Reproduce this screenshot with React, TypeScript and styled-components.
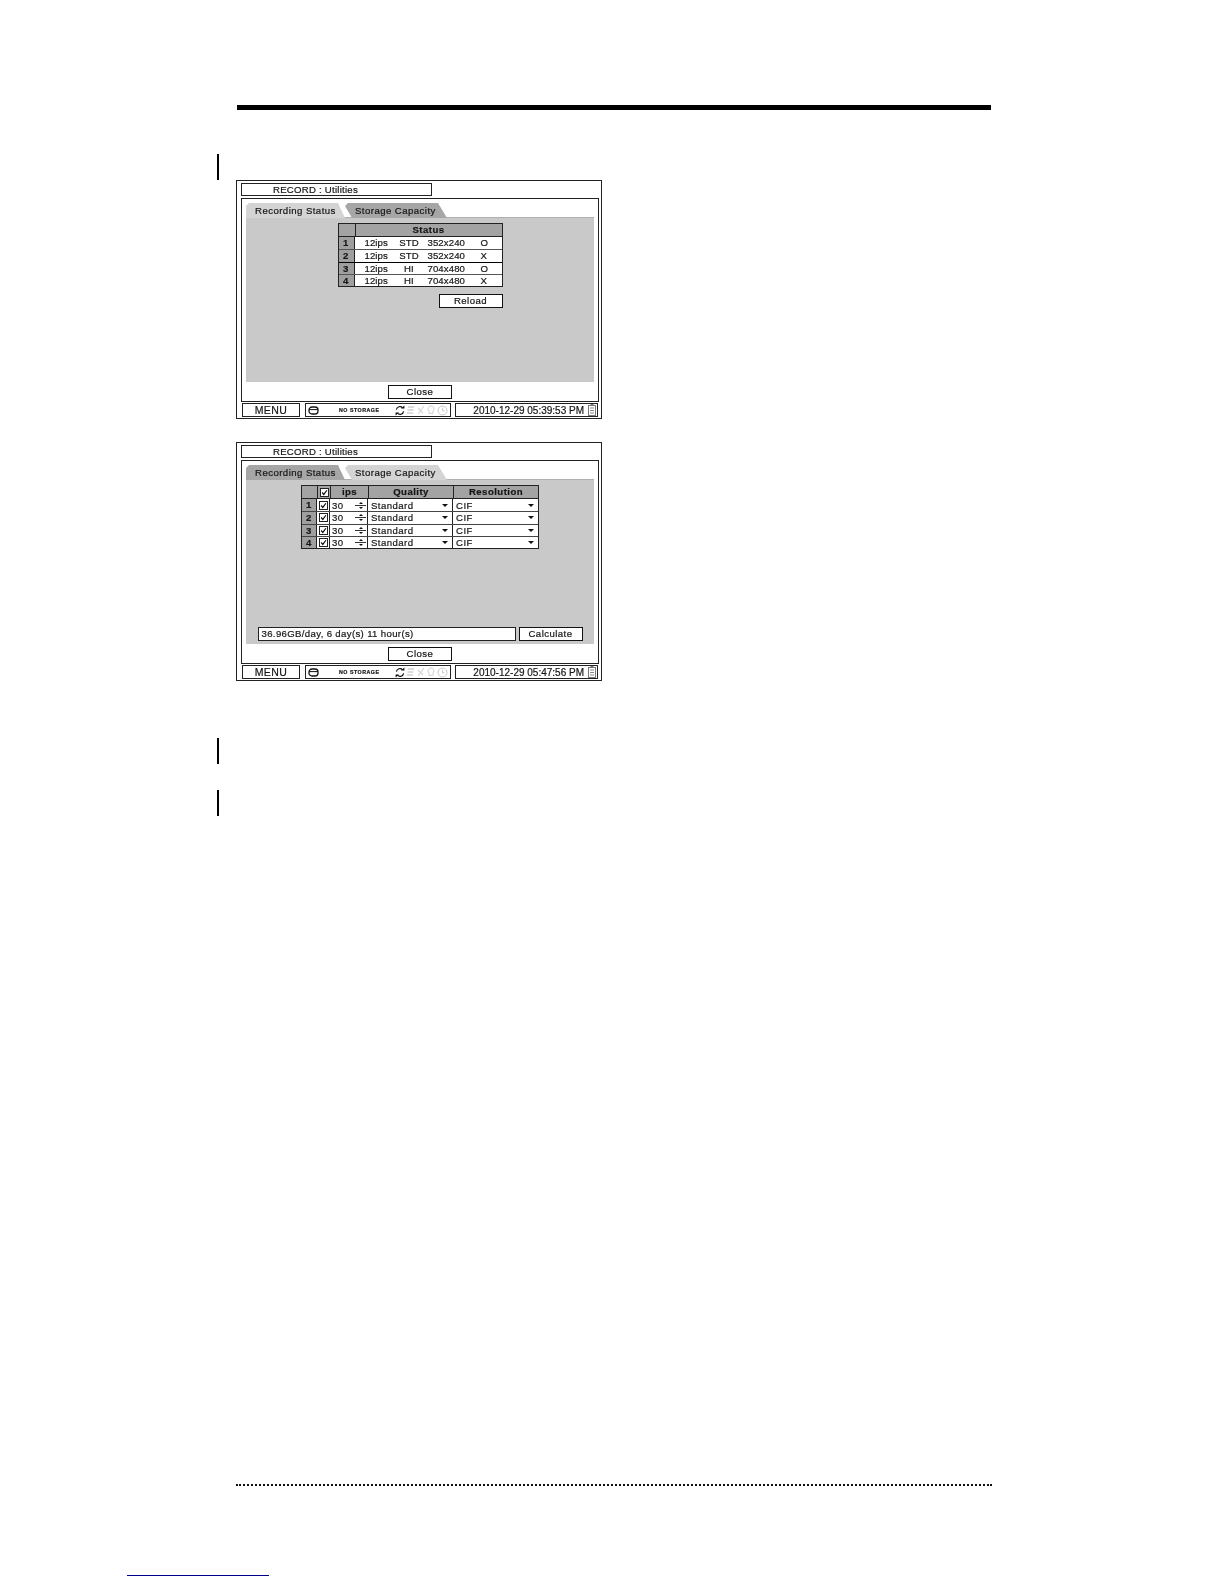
import styled, { createGlobalStyle } from 'styled-components';

const GlobalStyle = createGlobalStyle`
  html, body {
    margin: 0;
    padding: 0;
    background: #ffffff;
    font-family: "Liberation Sans", Arial, sans-serif;
  }
`;

const STATUS_ROWS = [
  { id: 1, ips: '12ips', quality: 'STD', size: '352x240', flag: 'O' },
  { id: 2, ips: '12ips', quality: 'STD', size: '352x240', flag: 'X' },
  { id: 3, ips: '12ips', quality: 'HI', size: '704x480', flag: 'O' },
  { id: 4, ips: '12ips', quality: 'HI', size: '704x480', flag: 'X' },
];

const App = () => {
  return (
    <Page>
      <GlobalStyle />
      <TopRule />
      <SideMark $marginTop={44} />
      <Screen $marginTop={0}>
        <TitleBox>RECORD : Utilities</TitleBox>
        <Panel>
          <Tabs active="recording" />
          <GreyArea>
            <StatusTable>
              <StatusHead>
                <HeadCell />
                <HeadCell>Status</HeadCell>
              </StatusHead>
              {STATUS_ROWS.map((row) => (
                <StatusRow key={row.id} $thick={row.id === 3}>
                  <IndexCell>{row.id}</IndexCell>
                  <StatusData>
                    <span>{row.ips}</span>
                    <StatusQuality>{row.quality}</StatusQuality>
                    <span>{row.size}</span>
                    <span>{row.flag}</span>
                  </StatusData>
                </StatusRow>
              ))}
            </StatusTable>
            <ReloadRow>
              <ActionButton>Reload</ActionButton>
            </ReloadRow>
          </GreyArea>
          <CloseRow>
            <ActionButton>Close</ActionButton>
          </CloseRow>
        </Panel>
        <StatusBar time="2010-12-29 05:39:53 PM" />
      </Screen>
      <Screen $marginTop={23}>
        <TitleBox>RECORD : Utilities</TitleBox>
        <Panel>
          <Tabs active="storage" />
          <GreyArea>
            <StorageTable>
              <StorageHead>
                <HeadCell />
                <HeadCheck>
                  <CheckBox />
                </HeadCheck>
                <HeadCell>ips</HeadCell>
                <HeadCell>Quality</HeadCell>
                <HeadCell>Resolution</HeadCell>
              </StorageHead>
              {[1, 2, 3, 4].map((id) => (
                <StorageRow key={id}>
                  <IndexCell>{id}</IndexCell>
                  <CheckCell>
                    <CheckBox />
                  </CheckCell>
                  <IpsCell>
                    <span>30</span>
                    <Spinner>
                      <SpinUp />
                      <SpinLine />
                      <SpinDown />
                    </Spinner>
                  </IpsCell>
                  <SelectCell>
                    <span>Standard</span>
                    <SelectArrow />
                  </SelectCell>
                  <SelectCell>
                    <span>CIF</span>
                    <SelectArrow />
                  </SelectCell>
                </StorageRow>
              ))}
            </StorageTable>
            <CalcRow>
              <CalcResult>36.96GB/day, 6 day(s) 11 hour(s)</CalcResult>
              <ActionButton>Calculate</ActionButton>
            </CalcRow>
          </GreyArea>
          <CloseRow>
            <ActionButton>Close</ActionButton>
          </CloseRow>
        </Panel>
        <StatusBar time="2010-12-29 05:47:56 PM" />
      </Screen>
      <SideMark $marginTop={57} />
      <SideMark $marginTop={26} />
      <DottedRule />
      <LinkRule />
    </Page>
  );
};

const Tabs = ({ active }: { active: 'recording' | 'storage' }) => {
  return (
    <TabStrip>
      <TabRecording $isActive={active === 'recording'}>Recording Status</TabRecording>
      <TabStorage $isActive={active === 'storage'}>Storage Capacity</TabStorage>
    </TabStrip>
  );
};

const CheckBox = () => {
  return (
    <CheckFrame>
      <svg width="9" height="9" viewBox="0 0 9 9">
        <path d="M1.5 4.5 L3.6 7 L7.6 1.6" fill="none" stroke="#111" strokeWidth="1.5" />
      </svg>
    </CheckFrame>
  );
};

const StatusBar = ({ time }: { time: string }) => {
  return (
    <BarRow>
      <MenuBox>MENU</MenuBox>
      <StorageBox>
        <svg width="11" height="9" viewBox="0 0 11 9">
          <rect x="1" y="1" width="9" height="7" rx="3" fill="none" stroke="#111" strokeWidth="1.3" />
          <path d="M1 3.6 H10" stroke="#111" strokeWidth="1" />
        </svg>
        <NoStorage>NO STORAGE</NoStorage>
        <BarIcons>
          <svg width="10" height="11" viewBox="0 0 10 11">
            <path d="M1.4 4.6 A3.6 3.6 0 0 1 7.6 2.8 M8.6 6.4 A3.6 3.6 0 0 1 2.4 8.2" fill="none" stroke="#111" strokeWidth="1.2" />
            <path d="M6 3.6 H9.4 V0.6 Z M4 7.4 H0.6 V10.4 Z" fill="#111" />
          </svg>
          <svg width="9" height="10" viewBox="0 0 9 10">
            <path d="M2 2 H8 M1.5 5 H7.5 M1 8 H7" stroke="#cfcfcf" strokeWidth="1.6" />
          </svg>
          <svg width="9" height="10" viewBox="0 0 9 10">
            <path d="M2 9 L8 1 M2 3 L7 8" stroke="#d4d4d4" strokeWidth="1.2" />
          </svg>
          <svg width="10" height="10" viewBox="0 0 10 10">
            <path d="M5 1 A3 3 0 0 1 7 6.2 V8.4 H3 V6.2 A3 3 0 0 1 5 1 Z" fill="none" stroke="#cfcfcf" strokeWidth="1" />
          </svg>
          <svg width="11" height="11" viewBox="0 0 11 11">
            <circle cx="5.5" cy="5.5" r="4.5" fill="none" stroke="#c8c8c8" strokeWidth="1" />
            <path d="M5.5 2.6 V5.8 H7.6" fill="none" stroke="#c8c8c8" strokeWidth="1" />
          </svg>
        </BarIcons>
      </StorageBox>
      <TimeBox>
        <span>{time}</span>
        <svg width="8" height="12" viewBox="0 0 8 12">
          <rect x="0.5" y="1.5" width="7" height="10" fill="none" stroke="#777" strokeWidth="1" />
          <rect x="2.5" y="0" width="3" height="1.5" fill="#777" />
          <path d="M2 4 H6 M2 6.5 H6 M2 9 H6" stroke="#888" strokeWidth="1.2" />
        </svg>
      </TimeBox>
    </BarRow>
  );
};

const Page = styled.div`
  width: 1224px;
  height: 1584px;
  padding-top: 105px;
  box-sizing: border-box;
  overflow: hidden;
  background: #ffffff;
`;

const TopRule = styled.div`
  width: 754px;
  height: 5px;
  margin-left: 237px;
  background: #000000;
`;

const SideMark = styled.div<{ $marginTop: number }>`
  width: 2px;
  height: 26px;
  margin-top: ${(props) => props.$marginTop}px;
  margin-left: 217px;
  background: #000000;
`;

const DottedRule = styled.div`
  width: 756px;
  height: 0;
  margin-top: 668px;
  margin-left: 236px;
  border-top: 2px dotted #111111;
`;

const LinkRule = styled.div`
  width: 142px;
  height: 1px;
  margin-top: 89px;
  margin-left: 127px;
  background: #00008b;
`;

const Screen = styled.div<{ $marginTop: number }>`
  display: flex;
  flex-direction: column;
  width: 366px;
  height: 239px;
  margin-top: ${(props) => props.$marginTop}px;
  margin-left: 236px;
  padding: 2px 2px 0 4px;
  box-sizing: border-box;
  border: 1px solid #222222;
  background: #ffffff;
  color: #161616;
  font-size: 9.6px;
  letter-spacing: 0.45px;
  -webkit-text-stroke: 0.2px #161616;
  filter: blur(0.25px);
`;

const TitleBox = styled.div`
  width: 191px;
  height: 13px;
  padding-left: 31px;
  box-sizing: border-box;
  border: 1px solid #222222;
  line-height: 11px;
  letter-spacing: 0.25px;
  white-space: nowrap;
`;

const Panel = styled.div`
  display: flex;
  flex-direction: column;
  width: 358px;
  height: 204px;
  margin-top: 2px;
  padding: 4px 4px 0;
  box-sizing: border-box;
  border: 1px solid #222222;
`;

const TabStrip = styled.div`
  display: flex;
  height: 15px;
  flex-shrink: 0;
  box-sizing: border-box;
  border-bottom: 1px solid #b0b0b0;
`;

const TabRecording = styled.div<{ $isActive: boolean }>`
  width: 99px;
  height: 15px;
  padding-left: 9px;
  box-sizing: border-box;
  background: ${(props) => (props.$isActive ? '#d4d4d4' : '#a6a6a6')};
  line-height: 15px;
  white-space: nowrap;
  clip-path: polygon(3px 0, 92px 0, 99px 100%, 0 100%, 0 3px);
`;

const TabStorage = styled(TabRecording)`
  width: 102px;
  padding-left: 10px;
  clip-path: polygon(3px 0, 93px 0, 102px 100%, 7px 100%, 0 3px);
`;

const GreyArea = styled.div`
  display: flex;
  flex-direction: column;
  align-items: center;
  height: 164px;
  padding: 5px 0 3px;
  box-sizing: border-box;
  background: #c9c9c9;
`;

const TableFrame = styled.div`
  display: flex;
  flex-direction: column;
  box-sizing: border-box;
  background: #ffffff;
`;

const StatusTable = styled(TableFrame)`
  width: 165px;
  border: 1px solid #222222;
`;

const GridHead = styled.div`
  display: grid;
  height: 12px;
  background: #a3a3a3;
  border-bottom: 1px solid #222222;
  box-sizing: content-box;
  font-weight: 700;
`;

const StatusHead = styled(GridHead)`
  grid-template-columns: 16px 1fr;
`;

const HeadCell = styled.div`
  border-left: 1px solid #222222;
  line-height: 12px;
  text-align: center;
  font-weight: 700;

  &:first-child {
    border-left: none;
  }
`;

const StatusRow = styled.div<{ $thick: boolean }>`
  display: grid;
  grid-template-columns: 16px 1fr;
  height: 12.25px;
  box-sizing: border-box;
  border-top: 1px solid ${(props) => (props.$thick ? '#000000' : '#555555')};

  &:nth-child(2) {
    border-top: none;
  }
`;

const IndexCell = styled.div`
  background: #9f9f9f;
  border-right: 1px solid #222222;
  line-height: 11px;
  text-align: center;
  font-weight: 700;
`;

const StatusData = styled.div`
  display: grid;
  grid-template-columns: 33px 23px 60px 1fr;
  padding-left: 10px;
  line-height: 11px;
  letter-spacing: 0.1px;
  white-space: nowrap;

  span:nth-child(3) {
    padding-left: 7px;
  }
`;

const StatusQuality = styled.span`
  text-align: center;
`;

const ReloadRow = styled.div`
  display: flex;
  justify-content: flex-end;
  width: 165px;
  margin-top: 7px;
`;

const ActionButton = styled.div`
  width: 64px;
  height: 14px;
  box-sizing: border-box;
  border: 1px solid #111111;
  background: #ffffff;
  line-height: 12px;
  text-align: center;
  white-space: nowrap;
`;

const CloseRow = styled.div`
  display: flex;
  justify-content: center;
  margin-top: 3px;
`;

const StorageTable = styled(TableFrame)`
  width: 238px;
  border: 1px solid #222222;
`;

const StorageHead = styled(GridHead)`
  grid-template-columns: 15px 13px 38px 85px 1fr;
`;

const HeadCheck = styled(HeadCell)`
  display: flex;
  align-items: center;
  justify-content: center;
`;

const StorageRow = styled.div`
  display: grid;
  grid-template-columns: 15px 13px 38px 85px 1fr;
  height: 12.25px;
  box-sizing: border-box;
  border-top: 1px solid #444444;

  &:nth-child(2) {
    border-top: none;
  }
`;

const CheckCell = styled.div`
  display: flex;
  align-items: center;
  justify-content: center;
  border-right: 1px solid #222222;
`;

const CheckFrame = styled.div`
  display: flex;
  align-items: center;
  justify-content: center;
  width: 9px;
  height: 9px;
  box-sizing: border-box;
  border: 1px solid #222222;
  background: #ffffff;
`;

const IpsCell = styled.div`
  display: flex;
  align-items: center;
  justify-content: space-between;
  padding-left: 2px;
  line-height: 11px;
  border-right: 1px solid #222222;
`;

const Spinner = styled.div`
  display: flex;
  flex-direction: column;
  align-items: center;
  gap: 1px;
  width: 13px;
`;

const SpinUp = styled.div`
  width: 0;
  height: 0;
  border-left: 2px solid transparent;
  border-right: 2px solid transparent;
  border-bottom: 2px solid #111111;
`;

const SpinDown = styled.div`
  width: 0;
  height: 0;
  border-left: 2px solid transparent;
  border-right: 2px solid transparent;
  border-top: 2px solid #111111;
`;

const SpinLine = styled.div`
  width: 11px;
  height: 1px;
  background: #333333;
`;

const SelectCell = styled.div`
  display: flex;
  align-items: center;
  justify-content: space-between;
  padding: 0 4px 0 3px;
  line-height: 11px;
  border-right: 1px solid #222222;

  &:last-child {
    border-right: none;
  }
`;

const SelectArrow = styled.div`
  width: 0;
  height: 0;
  border-left: 3px solid transparent;
  border-right: 3px solid transparent;
  border-top: 3px solid #111111;
`;

const CalcRow = styled.div`
  display: flex;
  align-items: center;
  gap: 3px;
  width: 325px;
  height: 14px;
  margin-top: auto;
`;

const CalcResult = styled.div`
  width: 258px;
  height: 14px;
  padding-left: 3px;
  box-sizing: border-box;
  border: 1px solid #222222;
  background: #ffffff;
  line-height: 12px;
  letter-spacing: 0.35px;
  white-space: nowrap;
`;

const BarRow = styled.div`
  display: flex;
  height: 14px;
  margin-top: 1px;
  margin-left: 1px;
`;

const BarBox = styled.div`
  height: 14px;
  box-sizing: border-box;
  border: 1px solid #222222;
  white-space: nowrap;
`;

const MenuBox = styled(BarBox)`
  width: 58px;
  line-height: 12px;
  text-align: center;
  font-size: 10.5px;
`;

const StorageBox = styled(BarBox)`
  display: flex;
  align-items: center;
  width: 146px;
  margin-left: 5px;
  padding-left: 2px;
`;

const NoStorage = styled.span`
  margin-left: 20px;
  font-size: 5.3px;
  font-weight: 700;
  letter-spacing: 0.5px;
`;

const BarIcons = styled.div`
  display: flex;
  align-items: center;
  gap: 1px;
  margin-left: 15px;
`;

const TimeBox = styled(BarBox)`
  display: flex;
  align-items: center;
  justify-content: flex-end;
  gap: 4px;
  width: 143px;
  margin-left: 4px;
  padding-right: 1px;
  font-size: 10px;
  letter-spacing: 0;
`;

export default App;
